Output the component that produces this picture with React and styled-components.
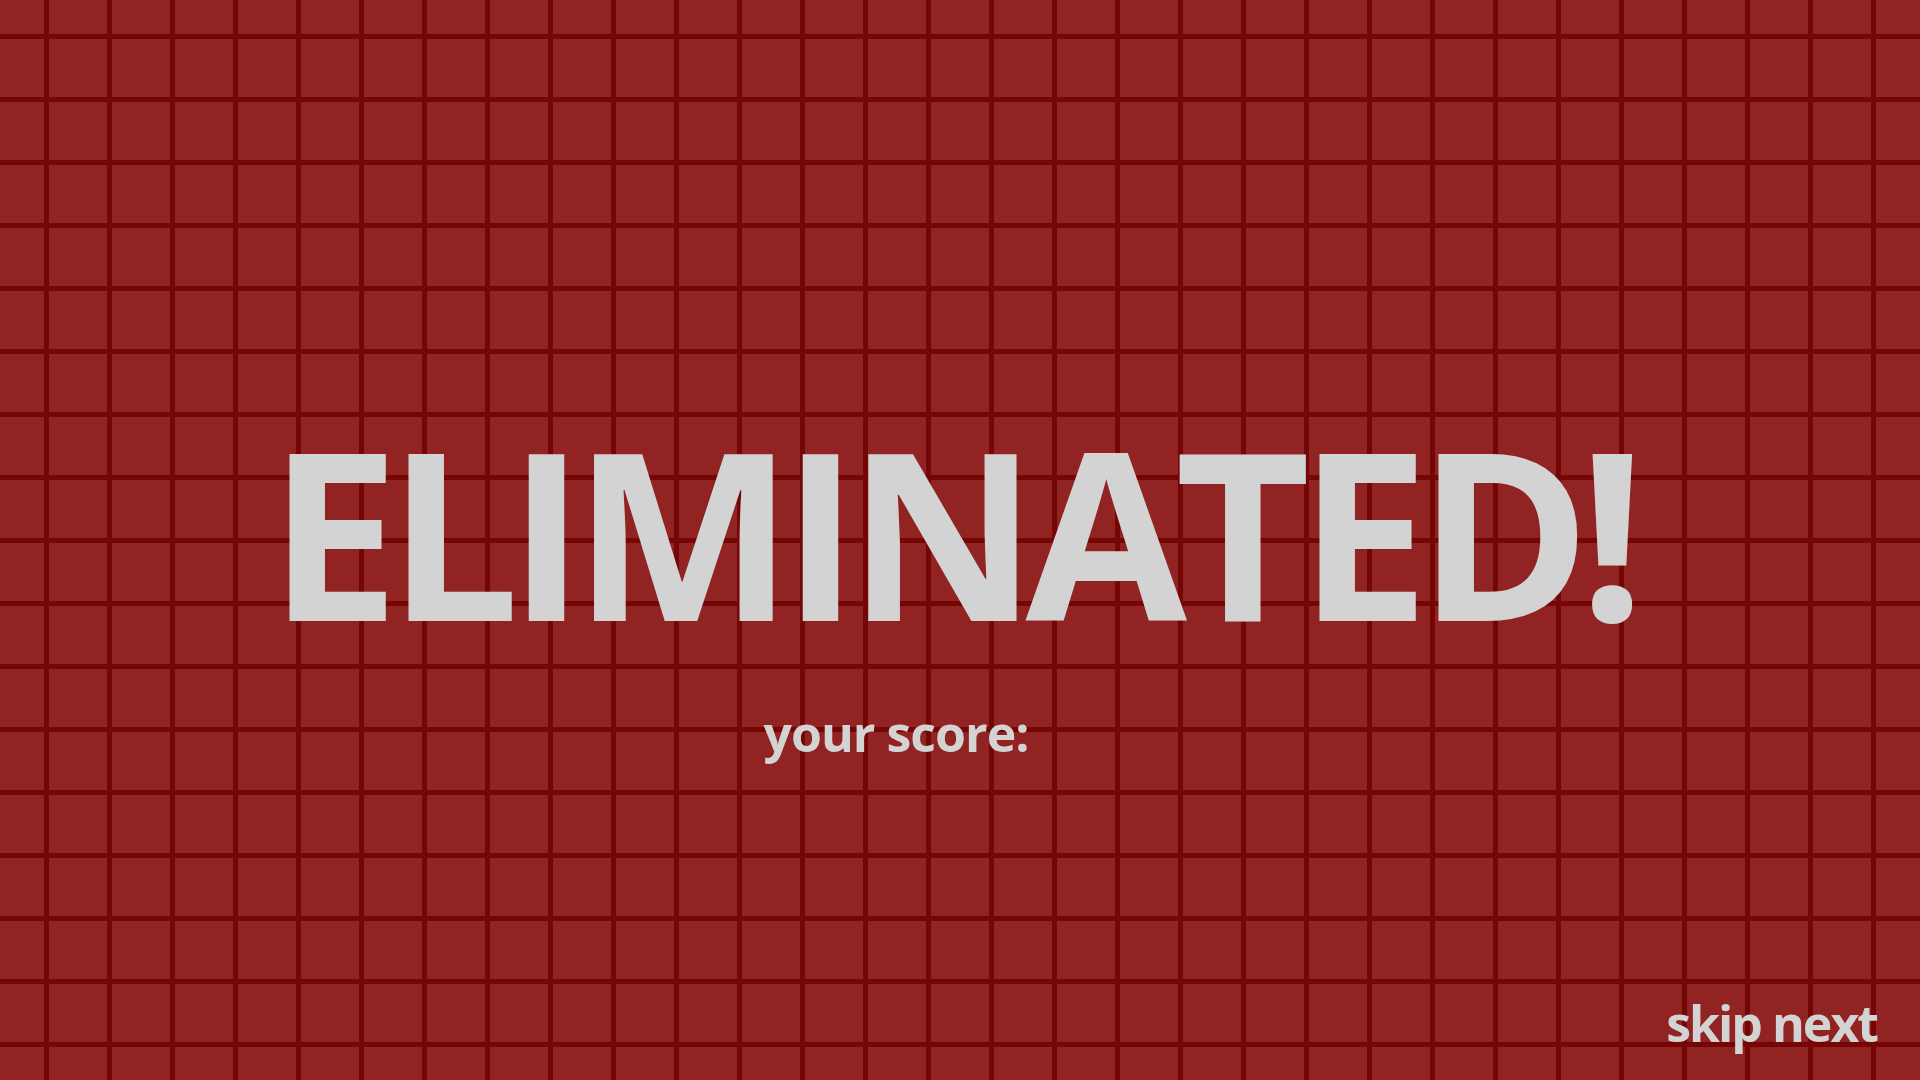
import React from "react";
import styled, { createGlobalStyle } from "styled-components";

const GlobalStyle = createGlobalStyle`
  html, body {
    margin: 0;
    padding: 0;
    height: 100%;
  }
  body {
    background: #912323;
    font-family: "Open Sans", "Noto Sans", sans-serif;
    overflow: hidden;
  }
  #root { height: 100%; }
`;

const Page = styled.div`
  box-sizing: border-box;
  width: 100vw;
  height: 100vh;
  display: flex;
  flex-direction: column;
  background-color: #912323;
  background-image:
    linear-gradient(to right, #740606 0 5px, transparent 5px),
    linear-gradient(to bottom, #740606 0 5px, transparent 5px);
  background-size: 63px 63px;
  background-position: 44px 34px;
  color: #d3d3d3;
`;

const Main = styled.main`
  flex: 1;
  display: flex;
  flex-direction: column;
  align-items: center;
  padding-top: 414px;
`;

const Title = styled.h1`
  margin: 0;
  padding-right: 18px;
  font-size: 234px;
  line-height: 1;
  font-weight: 700;
  letter-spacing: -12px;
`;

const ScoreRow = styled.div`
  display: flex;
  align-items: baseline;
  margin-top: 60px;
  font-size: 50px;
  line-height: 1;
  font-weight: 700;
  letter-spacing: -1px;
`;

const ScoreValue = styled.span`
  min-width: 128px;
`;

const Footer = styled.footer`
  display: flex;
  justify-content: flex-end;
  padding: 0 43px 32px 0;
`;

const SkipButton = styled.button`
  border: none;
  background: none;
  padding: 0;
  color: #d3d3d3;
  font-family: "Open Sans", "Noto Sans", sans-serif;
  font-size: 50px;
  line-height: 1;
  font-weight: 700;
  letter-spacing: -2px;
  cursor: pointer;
`;

export default function App() {
  return (
    <>
      <GlobalStyle />
      <Page>
        <Main>
          <Title>ELIMINATED!</Title>
          <ScoreRow>
            <span>your score:</span>
            <ScoreValue />
          </ScoreRow>
        </Main>
        <Footer>
          <SkipButton>skip next</SkipButton>
        </Footer>
      </Page>
    </>
  );
}
